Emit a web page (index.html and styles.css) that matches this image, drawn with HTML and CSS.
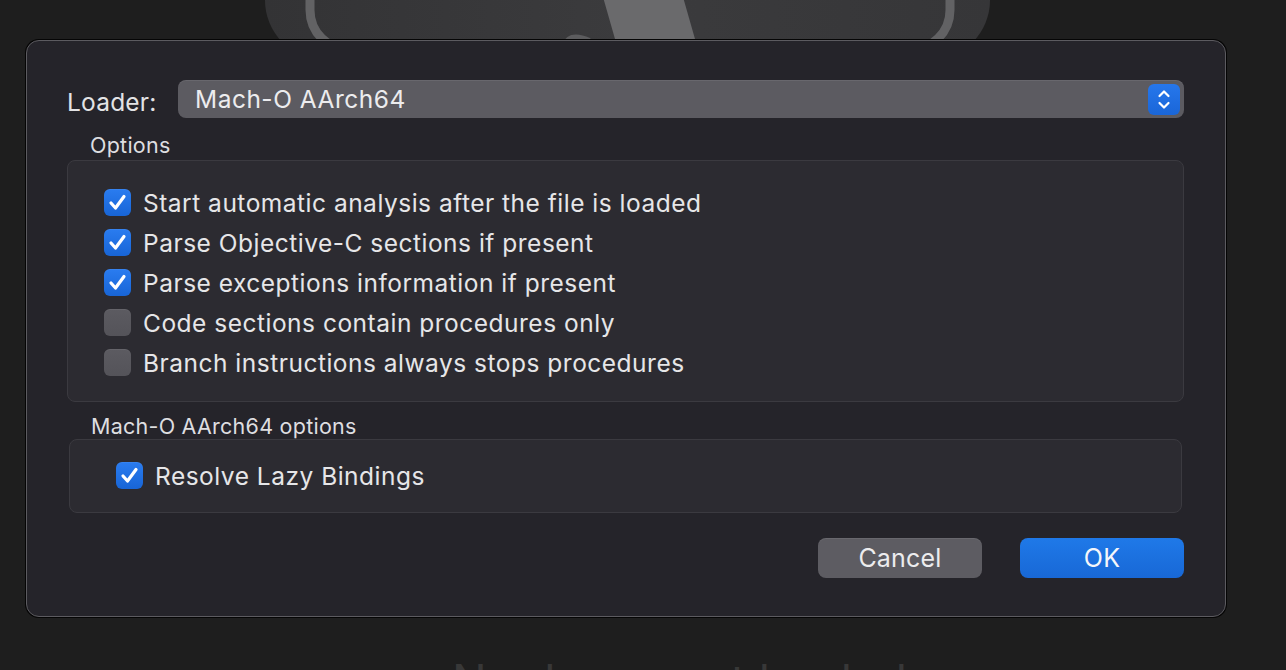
FILE: index.html
```html
<!DOCTYPE html>
<html lang="en">
<head>
<meta charset="utf-8">
<title>Loader</title>
<link rel="stylesheet" href="styles.css">
</head>
<body>
<div class="desktop">
  <svg class="app-icon" width="725" height="60" viewBox="0 0 725 60">
    <defs>
      <linearGradient id="ig" x1="0" y1="0" x2="1" y2="0">
        <stop offset="0" stop-color="#333335"/>
        <stop offset="0.5" stop-color="#3b3b3d"/>
        <stop offset="1" stop-color="#363638"/>
      </linearGradient>
    </defs>
    <rect x="0" y="-200" width="725" height="260" rx="60" fill="url(#ig)"/>
    <rect x="45" y="-200" width="640" height="250" rx="40" fill="none" stroke="#626264" stroke-width="9"/>
    <path d="M336 -10 L416 -10 L436 60 L356 60 Z" fill="#6a6a6c"/>
    <path d="M298 45 C300 33 312 32 325 38 L330 45 Z" fill="#5c5c5e"/>
  </svg>
  <div class="bg-caption">No document loaded</div>

  <div class="dialog">
    <div class="loader-row">
      <span class="loader-label">Loader:</span>
      <div class="popup">
        <span class="popup-text">Mach-O AArch64</span>
        <span class="stepper">
          <svg width="32" height="31" viewBox="0 0 32 31">
            <path d="M11.5 12 L16 7.5 L20.5 12" fill="none" stroke="#fff" stroke-width="2.2" stroke-linecap="round" stroke-linejoin="round"/>
            <path d="M11.5 19 L16 23.5 L20.5 19" fill="none" stroke="#fff" stroke-width="2.2" stroke-linecap="round" stroke-linejoin="round"/>
          </svg>
        </span>
      </div>
    </div>

    <div class="group-title">Options</div>
    <div class="group group-options">
      <label class="check-row"><span class="box on"><svg viewBox="0 0 27 27" width="27" height="27"><path d="M7 14 L11.5 19 L20 7.5" fill="none" stroke="#fff" stroke-width="3.2" stroke-linecap="round" stroke-linejoin="round"/></svg></span><span class="check-text">Start automatic analysis after the file is loaded</span></label>
      <label class="check-row"><span class="box on"><svg viewBox="0 0 27 27" width="27" height="27"><path d="M7 14 L11.5 19 L20 7.5" fill="none" stroke="#fff" stroke-width="3.2" stroke-linecap="round" stroke-linejoin="round"/></svg></span><span class="check-text">Parse Objective-C sections if present</span></label>
      <label class="check-row"><span class="box on"><svg viewBox="0 0 27 27" width="27" height="27"><path d="M7 14 L11.5 19 L20 7.5" fill="none" stroke="#fff" stroke-width="3.2" stroke-linecap="round" stroke-linejoin="round"/></svg></span><span class="check-text">Parse exceptions information if present</span></label>
      <label class="check-row"><span class="box"></span><span class="check-text">Code sections contain procedures only</span></label>
      <label class="check-row"><span class="box"></span><span class="check-text">Branch instructions always stops procedures</span></label>
    </div>

    <div class="group-title group-title-2">Mach-O AArch64 options</div>
    <div class="group group-macho">
      <label class="check-row"><span class="box on"><svg viewBox="0 0 27 27" width="27" height="27"><path d="M7 14 L11.5 19 L20 7.5" fill="none" stroke="#fff" stroke-width="3.2" stroke-linecap="round" stroke-linejoin="round"/></svg></span><span class="check-text">Resolve Lazy Bindings</span></label>
    </div>

    <div class="buttons">
      <button class="btn btn-cancel">Cancel</button>
      <button class="btn btn-ok">OK</button>
    </div>
  </div>
</div>
</body>
</html>
```

FILE: styles.css
```css
* { box-sizing: border-box; }
html, body {
  margin: 0;
  padding: 0;
  background: #1e1e1e;
  width: 1286px;
  height: 670px;
  overflow: hidden;
  font-family: Inter, "Noto Sans", "Liberation Sans", sans-serif;
  color: #e3e3e5;
}
.desktop {
  position: relative;
  width: 1286px;
  height: 670px;
  padding: 40px 0 0 26px;
}
.app-icon {
  position: absolute;
  left: 265px;
  top: 0;
}
.bg-caption {
  position: absolute;
  left: 452px;
  top: 658px;
  font-size: 46px;
  line-height: 1;
  color: #383838;
  white-space: nowrap;
}
.dialog {
  position: relative;
  width: 1200px;
  height: 577px;
  background: #25242a;
  border: 1px solid #5c5b60;
  border-radius: 13px;
  box-shadow: 0 0 0 1px #050505;
  padding: 39px 41px 0 40px;
  display: flex;
  flex-direction: column;
}
.loader-row {
  display: flex;
  align-items: center;
  height: 38px;
}
.loader-label {
  font-size: 24.5px;
  letter-spacing: 0.2px;
  width: 111px;
  line-height: 1;
  padding-top: 6px;
}
.popup {
  flex: 1;
  height: 38px;
  background: #5c5b61;
  border-radius: 8px;
  display: flex;
  align-items: center;
  justify-content: space-between;
  padding: 0 4px 0 17px;
  box-shadow: inset 0 1px 0 rgba(255,255,255,0.08);
}
.popup-text {
  font-size: 24.5px;
  letter-spacing: 0.5px;
  line-height: 1;
  color: #ececee;
}
.stepper {
  width: 32px;
  height: 31px;
  background: linear-gradient(#2677ec, #1a66d8);
  border-radius: 6px;
  display: block;
}
.stepper svg { display: block; }
.group-title {
  font-size: 21.5px;
  letter-spacing: 0.25px;
  margin: 15px 0 0 23px;
  height: 24px;
  line-height: 24px;
  color: #dedee0;
}
.group-title-2 { margin: 12px 0 0 24px; }
.group {
  background: #2c2b31;
  border: 1px solid #3b3a40;
  border-radius: 8px;
}
.group-options {
  margin: 3px 0 0 0;
  height: 242px;
  padding: 28px 0 0 36px;
  display: flex;
  flex-direction: column;
  gap: 13px;
}
.group-macho {
  margin: 1px 2px 0 2px;
  height: 74px;
  padding: 22px 0 0 46px;
}
.check-row {
  display: flex;
  align-items: center;
  height: 27px;
}
.box {
  width: 27px;
  height: 27px;
  border-radius: 6px;
  background: linear-gradient(#5c5b61, #545359);
  box-shadow: inset 0 1px 0 rgba(255,255,255,0.06);
  flex: none;
}
.box.on {
  background: linear-gradient(#2a7cf0, #1865d6);
}
.box svg { display: block; }
.check-text {
  margin-left: 12px;
  padding-top: 2px;
  font-size: 24.5px;
  letter-spacing: 0.5px;
  line-height: 1;
  color: #e6e6e8;
  white-space: nowrap;
}
.buttons {
  display: flex;
  justify-content: flex-end;
  gap: 38px;
  margin-top: 25px;
}
.btn {
  width: 164px;
  height: 40px;
  border: none;
  border-radius: 8px;
  font-family: inherit;
  font-size: 25px;
  letter-spacing: 0.2px;
  color: #ececee;
  padding: 0;
}
.btn-cancel {
  background: #5d5c62;
  box-shadow: inset 0 1px 0 rgba(255,255,255,0.08);
}
.btn-ok {
  background: linear-gradient(#1f79e8, #1868d6);
  color: #f4f6fa;
}
```
